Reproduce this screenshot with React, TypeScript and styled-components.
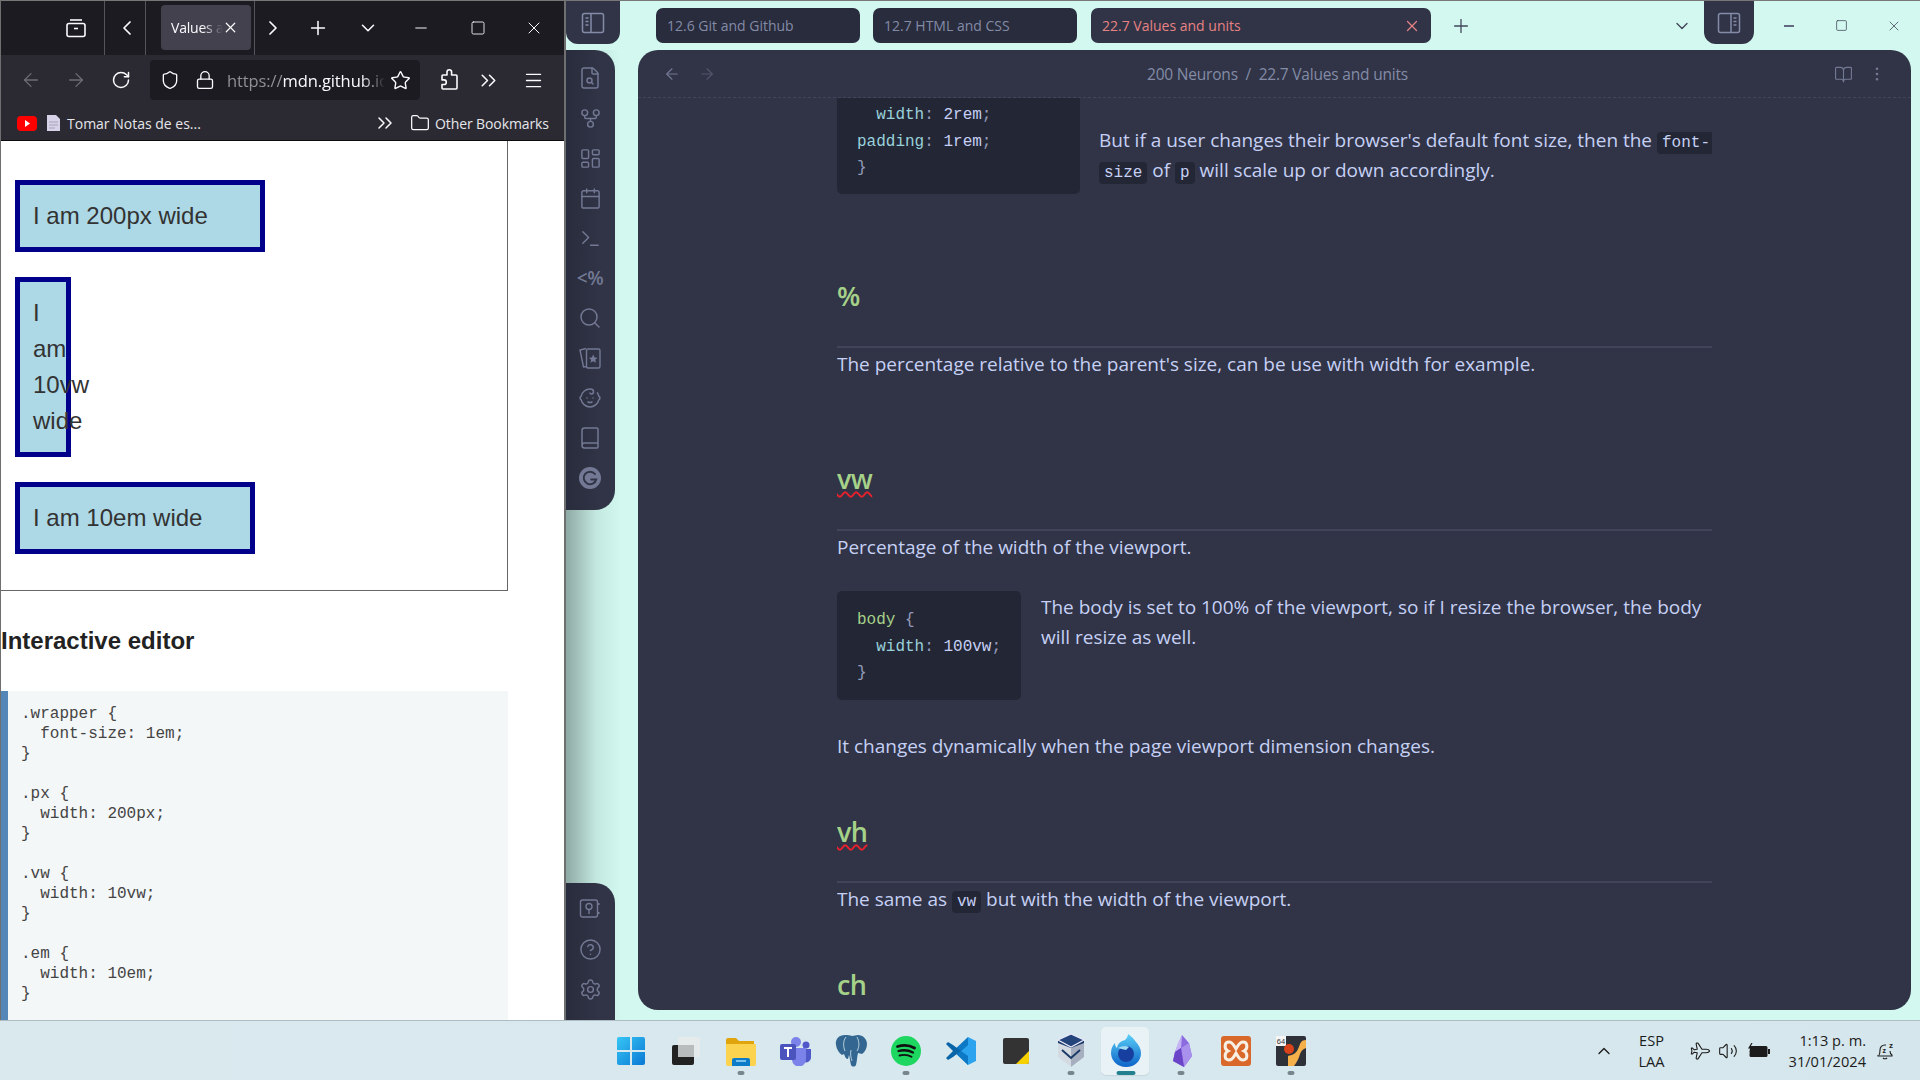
import React from "react";
import styled, { createGlobalStyle } from "styled-components";
import {
  ArrowLeft, ArrowRight, Baby, Book, BookOpen, Calendar, ChevronDown, ChevronLeft, ChevronRight, ChevronUp,
  ChevronsRight, CircleHelp, EllipsisVertical, FileSearch, Folder, GitFork, LayoutDashboard, Lock, Menu,
  Minus, Plus, RotateCw, Search, Settings, Shield, Square, Star, Terminal, Volume2, X, Plane,
} from "lucide-react";

const UI = `"Open Sans", "Noto Sans", sans-serif`;
const MONO = `"Liberation Mono", monospace`;

const Global = createGlobalStyle`
  html, body { margin: 0; padding: 0; width: 1920px; height: 1080px; overflow: hidden; background: #d2f8f0; }
  * { box-sizing: border-box; }
`;

const Screen = styled.div`display:flex;flex-direction:column;width:1920px;height:1080px;overflow:hidden;`;
const Windows = styled.div`display:flex;height:1020px;`;

/* ---------- Firefox ---------- */
const Browser = styled.div`width:566px;height:1020px;display:flex;flex-direction:column;border-left:1px solid #6f6f6f;border-right:2px solid #6f6f6f;border-top:1px solid #777;background:#fff;overflow:hidden;`;
const TabStrip = styled.div`height:54px;background:#1c1b22;display:flex;align-items:stretch;color:#fbfbfe;flex:none;`;
const Slot = styled.div<{ $w: number; $ml?: number; $dim?: boolean }>`
  width:${p => p.$w}px;margin-left:${p => p.$ml ?? 0}px;flex:none;display:flex;align-items:center;justify-content:center;
  color:${p => (p.$dim ? "#6e6d74" : "#fbfbfe")};
`;
const StripSep = styled.div<{ $ml?: number }>`width:1px;background:#55545c;margin-left:${p => p.$ml ?? 0}px;flex:none;`;
const BrowserTab = styled.div`width:90px;margin:4px 0 5px 15px;border-radius:4px;background:#42414d;display:flex;align-items:center;padding:0 12px 0 10px;position:relative;flex:none;`;
const TabLabel = styled.span`font:14px ${UI};letter-spacing:-.2px;color:#fbfbfe;white-space:nowrap;overflow:hidden;width:52px;-webkit-mask-image:linear-gradient(90deg,#000 60%,transparent);mask-image:linear-gradient(90deg,#000 60%,transparent);`;
const NavRow = styled.div`height:50px;background:#2b2a33;display:flex;align-items:center;padding-left:8px;flex:none;`;
const UrlBar = styled.div`width:270px;height:40px;margin-left:7px;background:#1c1b22;border-radius:4px;display:flex;align-items:center;color:#fbfbfe;flex:none;padding-left:10px;`;
const UrlText = styled.div`font:16.5px/22px ${UI};letter-spacing:-.1px;width:158px;margin-left:12px;padding-top:2px;overflow:hidden;white-space:nowrap;color:#fbfbfe;-webkit-mask-image:linear-gradient(90deg,#000 85%,transparent);mask-image:linear-gradient(90deg,#000 85%,transparent);`;
const UrlScheme = styled.span`color:#8f8f94;`;
const BookmarkRow = styled.div`height:36px;background:#2b2a33;border-bottom:1px solid #0c0c0d;display:flex;align-items:center;padding:1px 0 0 16px;color:#fbfbfe;flex:none;`;
const BookmarkText = styled.span<{ $w: number; $ls?: number }>`font:14px ${UI};letter-spacing:${p => p.$ls ?? 0}px;color:#e6e6ea;white-space:nowrap;width:${p => p.$w}px;flex:none;`;
const Demo = styled.div`width:507px;height:450px;border-right:1px solid #666;border-bottom:1px solid #666;padding:38.5px 0 0 14px;display:flex;flex-direction:column;gap:25px;flex:none;`;
const Sized = styled.div<{ $w: number }>`width:${p => p.$w}px;border:5px solid #00008b;background:#add8e6;padding:13px 13px;font:24px/36px "Liberation Sans",Arial,sans-serif;color:#333;`;
const EditorTitle = styled.h2`margin:27px 0 0;font:bold 24px/46px "Liberation Sans",Arial,sans-serif;color:#222;height:46px;flex:none;`;
const CodeSample = styled.pre`margin:27px 0 0;width:507px;flex:1;background:#f4f7f8;border-left:7px solid #5586b8;padding:13px 0 0 13px;font:16px/20px ${MONO};color:#444;`;

/* ---------- Obsidian ---------- */
const Obsidian = styled.div`flex:1;height:1020px;display:flex;flex-direction:column;background:#d2f8f0;border-top:1px solid #777;`;
const TitleRow = styled.div`height:49px;display:flex;align-items:flex-start;flex:none;color:#414559;`;
const SideToggle = styled.div`width:54px;height:43px;background:#303446;border-radius:0 0 12px 12px;display:flex;align-items:center;justify-content:center;color:#838ba7;flex:none;`;
const NoteTab = styled.div<{ $w: number; $ml: number; $active?: boolean }>`
  width:${p => p.$w}px;height:35px;margin:7px 0 0 ${p => p.$ml}px;background:${p => (p.$active ? "#303446" : "#292c3c")};
  border-radius:7px;display:flex;align-items:center;justify-content:space-between;padding:0 10px 0 11px;flex:none;
  font:14px ${UI};letter-spacing:0;color:${p => (p.$active ? "#e78284" : "#838ba7")};
`;
const TitleIcon = styled.div<{ $w: number; $ml: number; $mt?: number }>`
  width:${p => p.$w}px;margin:${p => p.$mt ?? 7}px 0 0 ${p => p.$ml}px;height:35px;display:flex;align-items:center;justify-content:center;flex:none;
`;
const PanelToggle = styled(SideToggle)`width:50px;margin-left:10px;height:43px;`;
const WorkRow = styled.div`flex:1;display:flex;min-height:0;`;
const RailColumn = styled.div`width:72px;flex:none;display:flex;flex-direction:column;justify-content:space-between;padding-bottom:0;background:linear-gradient(90deg,#8ea9a3 0,#c3e8e0 30px,#d2f8f0 55px);`;
const Rail = styled.div<{ $h: number; $pt: number; $top?: boolean }>`
  width:49px;height:${p => p.$h}px;padding-top:${p => p.$pt}px;
  border-radius:${p => (p.$top ? "0 20px 20px 0" : "0 20px 0 0")};
  background:linear-gradient(90deg,#292c3c,#303446 70%);display:flex;flex-direction:column;align-items:center;color:#737994;
`;
const RailSlot = styled.div`height:40px;width:100%;display:flex;align-items:center;justify-content:center;flex:none;padding-right:1px;`;
const PercentMark = styled.span`font:600 19px ${UI};letter-spacing:-.5px;color:#737994;`;
const Pane = styled.main`width:1273px;height:960px;background:#303446;border-radius:20px;display:flex;flex-direction:column;overflow:hidden;flex:none;`;
const PaneHeader = styled.header`height:48px;border-bottom:1px dashed #414559;display:flex;align-items:center;position:relative;color:#626880;flex:none;padding:1px 0 0 24px;`;
const HeadBtn = styled.div<{ $ml?: number; $mr?: number; $c?: string }>`width:20px;display:flex;justify-content:center;margin-left:${p => p.$ml ?? 0}px;margin-right:${p => p.$mr ?? 0}px;color:${p => p.$c ?? "#737994"};flex:none;`;
const PaneTitle = styled.div`flex:1;text-align:center;font:15.5px ${UI};letter-spacing:-.2px;color:#838ba7;padding-left:5px;`;
const Doc = styled.article`width:875px;margin-left:199px;color:#c6d0f5;font:19px/30px ${UI};letter-spacing:-.01px;flex:1;overflow:hidden;`;
const Row = styled.div<{ $mt?: number }>`display:flex;align-items:flex-start;margin-top:${p => p.$mt ?? 0}px;`;
const CodeBlock = styled.pre<{ $w: number; $pt: number; $h: number }>`
  margin:0;width:${p => p.$w}px;height:${p => p.$h}px;padding:${p => p.$pt}px 0 0 20px;background:#232634;
  border-radius:0 0 5px 5px;font:16px/26.7px ${MONO};letter-spacing:0;color:#c6d0f5;flex:none;
`;
const FullBlock = styled(CodeBlock)`border-radius:5px;`;
const Prop = styled.span`color:#99d1db;`;
const Sel = styled.span`color:#a6d189;`;
const Punct = styled.span`color:#949cbb;`;
const Para = styled.p<{ $mt?: number; $ml?: number }>`margin:${p => p.$mt ?? 0}px 0 0 ${p => p.$ml ?? 0}px;white-space:nowrap;`;
const Code = styled.code`background:#232634;border-radius:4px;padding:2px 5px;font:16px ${MONO};letter-spacing:0;color:#c6d0f5;`;
const Heading = styled.h2<{ $mt: number; $wavy?: boolean }>`
  margin:${p => p.$mt}px 0 0;font:600 27px/36px ${UI};letter-spacing:-.6px;color:#a6d189;height:36px;
  text-decoration:${p => (p.$wavy ? "underline wavy #e8202c 1.5px" : "none")};text-underline-offset:2px;text-decoration-skip-ink:none;
`;
const Rule = styled.hr<{ $mt: number }>`margin:${p => p.$mt}px 0 0;border:0;height:2px;background:#414559;`;

/* ---------- Taskbar ---------- */
const Taskbar = styled.footer`height:60px;flex:none;background:linear-gradient(90deg,#dae9ee,#d7e8ee 50%,#d5e6ec);border-top:1px solid #aebdc4;display:flex;align-items:center;padding-left:603px;position:relative;`;
const TaskBtn = styled.div<{ $active?: boolean }>`width:55px;height:58px;display:flex;align-items:center;justify-content:center;position:relative;flex:none;
  &::before{content:"";display:${p => (p.$active ? "block" : "none")};position:absolute;left:3px;right:4px;top:5px;bottom:5px;background:rgba(255,255,255,.45);border-radius:5px;box-shadow:0 1px 1px rgba(0,0,0,.08);}
  svg{position:relative;}
`;
const RunDot = styled.span<{ $active?: boolean }>`position:absolute;bottom:5px;left:50%;transform:translateX(-50%);width:${p => (p.$active ? 19 : 7)}px;height:4px;border-radius:2px;background:${p => (p.$active ? "#23818f" : "#77868c")};`;
const Tray = styled.div`margin-left:auto;display:flex;align-items:center;height:100%;color:#1c1c1c;padding-right:25px;`;
const TrayIcon = styled.div<{ $ml: number }>`margin-left:${p => p.$ml}px;display:flex;align-items:center;flex:none;`;
const PlaneMark = styled(Plane)`transform:rotate(45deg);`;
const Lang = styled.div`width:40px;margin-left:18px;text-align:center;font:14.6px/21px ${UI};color:#1c1c1c;`;
const Clock = styled.div`margin-left:19px;text-align:right;font:14.6px/21px ${UI};color:#1c1c1c;white-space:nowrap;`;

const FirefoxView = () => (
  <svg width="20" height="20" viewBox="0 0 20 20" fill="none" stroke="#fbfbfe" strokeWidth="1.6">
    <rect x="1" y="5.5" width="18" height="13" rx="2" /><path d="M4 2h12" /><path d="M8 10.5h4" />
  </svg>
);
const Extension = () => (
  <svg width="24" height="24" viewBox="0 0 24 24" fill="none" stroke="#fbfbfe" strokeWidth="1.6" strokeLinejoin="round">
    <path d="M10 4a2.300 2.300 0 0 1 4.600 0v3H19a1 1 0 0 1 1 1v12a1 1 0 0 1-1 1H6a1 1 0 0 1-1-1v-3.500h2a2.300 2.300 0 0 0 0-4.600H5V8a1 1 0 0 1 1-1h4z" />
  </svg>
);
const YouTube = () => (
  <svg width="20" height="15" viewBox="0 0 20 15" style={{ flex: "none" }}>
    <rect width="20" height="15" rx="4" fill="#f00" /><path d="M8 4l5 3.5L8 11z" fill="#fff" />
  </svg>
);
const DocIcon = () => (
  <svg width="13" height="16" viewBox="0 0 13 16" style={{ margin: "0 7px 0 10px", flex: "none" }}>
    <path d="M0 0h9l4 4v12H0z" fill="#d8d2e8" /><path d="M2 7h9M2 10h9M2 13h6" stroke="#a8a2b8" />
  </svg>
);
const Cards = () => (
  <svg width="24" height="24" viewBox="0 0 24 24" fill="none" stroke="currentColor" strokeWidth="1.4">
    <path d="M8 2.5L2 4l3.5 17 3.5-.5" /><rect x="8.5" y="3" width="13.5" height="19" rx="1.5" />
    <path d="M15.2 8.5l1.4 3 3 .3-2.3 2 .7 3-2.8-1.6-2.8 1.6.7-3-2.3-2 3-.3z" fill="currentColor" stroke="none" />
  </svg>
);
const Vault = () => (
  <svg width="22" height="22" viewBox="0 0 22 22" fill="none" stroke="currentColor" strokeWidth="1.4">
    <rect x="1.5" y="2" width="17" height="17" rx="2" /><circle cx="10" cy="8.5" r="3" /><path d="M10 11.5V16" />
    <path d="M18.5 6h2M18.5 15h2" strokeWidth="2" />
  </svg>
);
const Grammarly = () => (
  <svg width="24" height="24" viewBox="0 0 24 24" fill="none">
    <circle cx="12" cy="12" r="11" fill="#737994" />
    <path d="M17 8a6.3 6.3 0 1 0 1.2 5.4h-5" stroke="#303446" strokeWidth="2" strokeLinecap="round" />
  </svg>
);
const SidebarLeft = () => (
  <svg width="24" height="24" viewBox="0 0 24 24" fill="none" stroke="currentColor" strokeWidth="1.5">
    <rect x="1.5" y="2.5" width="21" height="19" rx="2" /><path d="M10 2.5v19" /><path d="M4.5 7h3M4.500 10.5h3M4.500 14h3" />
  </svg>
);
const SidebarRight = () => (
  <svg width="24" height="24" viewBox="0 0 24 24" fill="none" stroke="currentColor" strokeWidth="1.5">
    <rect x="1.5" y="2.5" width="21" height="19" rx="2" /><path d="M14 2.5v19" /><path d="M16.5 7h3M16.5 10.5h3M16.5 14h3" />
  </svg>
);
const Dash = ({ w = 10, c = "#626880" }: { w?: number; c?: string }) => (
  <svg width={w} height="4" viewBox="0 0 10 4"><path d="M0 2h10" stroke={c} strokeWidth="2" /></svg>
);

/* taskbar logos */
const WinLogo = () => (
  <svg width="30" height="30" viewBox="0 0 30 30">
    <defs><linearGradient id="w" x1="0" y1="0" x2="1" y2="1"><stop offset="0" stopColor="#37c6f5" /><stop offset="1" stopColor="#0a78d4" /></linearGradient></defs>
    <path d="M1 3a2 2 0 0 1 2-2h11v13H1zM16 1h11a2 2 0 0 1 2 2v11H16zM1 16h13v13H3a2 2 0 0 1-2-2zM16 16h13v11a2 2 0 0 1-2 2H16z" fill="url(#w)" />
  </svg>
);
const TaskView = () => (
  <svg width="30" height="30" viewBox="0 0 30 30">
    <rect x="1" y="9" width="22" height="20" rx="2" fill="#222" /><rect x="7" y="1" width="22" height="20" rx="2" fill="#e8eaea" opacity=".85" />
    <rect x="7" y="9" width="16" height="12" fill="#b8bcbc" />
  </svg>
);
const Explorer = () => (
  <svg width="30" height="30" viewBox="0 0 30 30">
    <path d="M0 4a2 2 0 0 1 2-2h8l3 3h15v6H0z" fill="#e0a40c" /><path d="M0 8h30v20a2 2 0 0 1-2 2H2a2 2 0 0 1-2-2z" fill="#fcd34f" />
    <path d="M6 24a2 2 0 0 1 2-2h14a2 2 0 0 1 2 2v6H6z" fill="#0d7cc8" /><path d="M10 25h10" stroke="#9fd8f8" strokeWidth="1.5" />
  </svg>
);
const Teams = () => (
  <svg width="32" height="30" viewBox="0 0 32 30">
    <circle cx="16" cy="6" r="5" fill="#7b83eb" /><circle cx="26" cy="9" r="3.5" fill="#5059c9" />
    <path d="M22 13h9v9a5 5 0 0 1-7 4z" fill="#5059c9" /><path d="M9 12h17v11a7 7 0 0 1-14 1z" fill="#7b83eb" />
    <rect x="0" y="8" width="16" height="16" rx="2" fill="#4b53bc" /><path d="M4 12h8M8 12v9" stroke="#fff" strokeWidth="2" />
  </svg>
);
const Elephant = () => (
  <svg width="32" height="34" viewBox="0 0 32 34">
    <path d="M10 1c-6 0-10 4-9 10 .5 4 3 8 6 10l2-1c1 3 2 5 4 5l1-4c1 3 1 7 2 10 1 2 4 2 5 0 1-4 1-8 2-12l4 1c3-2 5-6 5-10 0-5-4-9-9-9-2 0-4 .8-6 1-2-.7-4-1-7-1z" fill="#336791" />
    <path d="M11 3c-3 4-3 9-1 14M22 3c2 4 3 9 0 14M16 16c-1 4 0 8 1 11" stroke="#d7e8ee" strokeWidth=".8" fill="none" />
  </svg>
);
const Spotify = () => (
  <svg width="30" height="30" viewBox="0 0 30 30" fill="none" stroke="#111" strokeLinecap="round">
    <circle cx="15" cy="15" r="15" fill="#1ed760" stroke="none" />
    <path d="M6.500 10.500c6-1.800 12-1.300 17 1.500" strokeWidth="2.8" /><path d="M7.500 15c5-1.300 10-.9 14.500 1.500" strokeWidth="2.3" /><path d="M8.500 19.500c4-1 8.500-.7 12 1.300" strokeWidth="1.9" />
  </svg>
);
const VSCode = () => (
  <svg width="30" height="30" viewBox="0 0 30 30">
    <path d="M22 1l8 4v20l-8 4-12-12 12-9z" fill="#2ba3ee" /><path d="M22 1L7 15l15 14V20l-7-5 7-6z" fill="#0d78c4" />
    <path d="M22 9L7 21l-5 3-2-2 7-7-7-7 2-2 5 3 8 6z" fill="#0a65a8" />
  </svg>
);
const Sticky = () => (
  <svg width="26" height="26" viewBox="0 0 26 26">
    <rect width="26" height="26" rx="2" fill="#333" /><path d="M26 13v11a2 2 0 0 1-2 2H13z" fill="#f7d000" />
  </svg>
);
const VBox = () => (
  <svg width="30" height="36" viewBox="0 0 30 36">
    <path d="M15 1L2 7v14l13 7 13-7V7z" fill="#1b3a68" /><path d="M15 1l13 6-13 7L2 7z" fill="#24447c" stroke="#eef" strokeWidth="1.200" />
    <path d="M2 10v14l13 10V15z" fill="#d4dae2" /><path d="M28 10v14L15 34V15z" fill="#a6afbf" /><path d="M6 17l9 8 9-8" stroke="#1b3a68" fill="none" strokeWidth="2" />
  </svg>
);
const Fox = () => (
  <svg width="30" height="34" viewBox="0 0 30 34">
    <defs><linearGradient id="fx" x1="0" y1="0" x2="0" y2="1"><stop offset="0" stopColor="#5bd0f8" /><stop offset="1" stopColor="#0c63c8" /></linearGradient></defs>
    <path d="M15 33C6 33 0 26 0 19 0 14 2 11 4 9c0 3 1 4 2 5 1-5 4-7 8-8 2-2 3-4 3-6 4 3 6 5 8 8 3 3 5 7 5 11 0 8-6 14-15 14z" fill="url(#fx)" />
    <circle cx="15" cy="20" r="8" fill="#173fa0" /><path d="M7 14c3-2 8-3 11-1l-3 3c-3-1-6-1-8-2z" fill="#9fdcf5" />
  </svg>
);
const Gem = () => (
  <svg width="22" height="32" viewBox="0 0 22 32">
    <path d="M12 0l7 8 3 13-8 11-11-6 2-9z" fill="#8b6be0" /><path d="M12 0l-1 13-6 4 3-9z" fill="#c4b2f4" /><path d="M11 13l8-5 3 13-8 11z" fill="#a890ec" /><path d="M5 17l6-4 3 19-11-6z" fill="#6a45c8" />
  </svg>
);
const Xampp = () => (
  <svg width="30" height="30" viewBox="0 0 30 30">
    <rect width="30" height="30" rx="3" fill="#d9682a" />
    <path d="M8 6c4 0 5 4 7 7 2-3 3-7 7-7 5 0 5 7 1 9 4 2 4 9-1 9-4 0-5-4-7-7-2 3-3 7-7 7-5 0-5-7-1-9-4-2-4-9 1-9z" fill="none" stroke="#f8efe4" strokeWidth="3" />
  </svg>
);
const Sublime64 = () => (
  <svg width="30" height="30" viewBox="0 0 30 30">
    <rect width="30" height="30" rx="2" fill="#2f3138" /><rect width="10" height="10" fill="#f5f5f5" />
    <text x="5" y="8" fontSize="7.5" textAnchor="middle" fontFamily="Liberation Sans" fill="#333">64</text>
    <path d="M30 4c-6 0-6 5-8 9-2 5-6 6-10 7v10h6c3-4 5-8 6-12 1-3 3-5 6-6z" fill="#f5b04a" /><circle cx="13" cy="13" r="5" fill="#d8431a" />
  </svg>
);
const ZBell = () => (
  <svg width="20" height="20" viewBox="0 0 20 20" fill="none" stroke="#1c1c1c" strokeWidth="1.100">
    <path d="M4 14c1-1 1-3 1-5 0-3 2-5 5-5h1M15 10c0 2 0 3 2 4v1H3v-1M8 17c1 1 3 1 4 0" />
    <text x="7.500" y="12" fontSize="7" fontFamily="Liberation Sans" fontWeight="bold" stroke="none" fill="#1c1c1c">z</text>
    <text x="14" y="7" fontSize="8" fontFamily="Liberation Sans" fontWeight="bold" stroke="none" fill="#1c1c1c">z</text>
  </svg>
);
const Battery = () => (
  <svg width="22" height="16" viewBox="0 0 22 16">
    <path d="M2 3h16a1.500 1.500 0 0 1 1.500 1.500v8a1.500 1.500 0 0 1-1.500 1.500H3a1.500 1.500 0 0 1-1.500-1.500z" fill="#1c1c1c" /><rect x="20" y="6" width="2" height="5" fill="#1c1c1c" />
    <path d="M4 0L1 5h3L2 9" stroke="#1c1c1c" fill="none" strokeWidth="1.200" />
  </svg>
);

const taskItems: { icon: React.ReactNode; run?: boolean; active?: boolean }[] = [
  { icon: <WinLogo /> }, { icon: <TaskView /> }, { icon: <Explorer />, run: true }, { icon: <Teams /> },
  { icon: <Elephant /> }, { icon: <Spotify />, run: true }, { icon: <VSCode /> }, { icon: <Sticky /> },
  { icon: <VBox />, run: true }, { icon: <Fox />, active: true }, { icon: <Gem />, run: true },
  { icon: <Xampp /> }, { icon: <Sublime64 />, run: true },
];

const railTop: React.ReactNode[] = [
  <FileSearch size={24} strokeWidth={1.5} />, <GitFork size={23} strokeWidth={1.5} />, <LayoutDashboard size={23} strokeWidth={1.5} />,
  <Calendar size={23} strokeWidth={1.5} />, <Terminal size={23} strokeWidth={1.5} />, <PercentMark>&lt;%</PercentMark>,
  <Search size={24} strokeWidth={1.5} />, <Cards />, <Baby size={24} strokeWidth={1.5} />, <Book size={24} strokeWidth={1.5} />, <Grammarly />,
];
const railBottom: React.ReactNode[] = [<Vault />, <CircleHelp size={23} strokeWidth={1.5} />, <Settings size={23} strokeWidth={1.5} />];

const sample = `.wrapper {
  font-size: 1em;
}

.px {
  width: 200px;
}

.vw {
  width: 10vw;
}

.em {
  width: 10em;
}`;

export default function App() {
  return (
    <Screen>
      <Global />
      <Windows>
        <Browser>
          <TabStrip>
            <Slot $w={56} $ml={47}><FirefoxView /></Slot>
            <StripSep />
            <Slot $w={37} $ml={3}><ChevronLeft size={24} strokeWidth={1.7} /></Slot>
            <StripSep />
            <BrowserTab>
              <TabLabel>Values and units</TabLabel>
              <X size={17} strokeWidth={1.7} style={{ position: "absolute", right: 12 }} />
            </BrowserTab>
            <StripSep $ml={3} />
            <Slot $w={36}><ChevronRight size={24} strokeWidth={1.7} /></Slot>
            <Slot $w={44} $ml={5}><Plus size={22} strokeWidth={1.7} /></Slot>
            <Slot $w={44} $ml={6}><ChevronDown size={22} strokeWidth={1.7} /></Slot>
            <Slot $w={54} $ml={4}><Minus size={18} strokeWidth={1.3} /></Slot>
            <Slot $w={54} $ml={3}><Square size={16} strokeWidth={1.3} /></Slot>
            <Slot $w={54} $ml={2}><X size={20} strokeWidth={1.2} /></Slot>
          </TabStrip>
          <NavRow>
            <Slot $w={44} $dim><ArrowLeft size={22} strokeWidth={1.4} /></Slot>
            <Slot $w={44} $ml={1} $dim><ArrowRight size={22} strokeWidth={1.4} /></Slot>
            <Slot $w={44} $ml={1}><RotateCw size={20} strokeWidth={1.8} /></Slot>
            <UrlBar>
              <Shield size={20} strokeWidth={1.6} />
              <Lock size={20} strokeWidth={1.6} style={{ marginLeft: 15 }} />
              <UrlText><UrlScheme>https://</UrlScheme>mdn.github.io/learning-area</UrlText>
              <Star size={21} strokeWidth={1.6} style={{ marginLeft: 5 }} />
            </UrlBar>
            <Slot $w={40} $ml={9}><Extension /></Slot>
            <Slot $w={38}><ChevronsRight size={25} strokeWidth={1.5} /></Slot>
            <Slot $w={40} $ml={6}><Menu size={21} strokeWidth={1.6} /></Slot>
          </NavRow>
          <BookmarkRow>
            <YouTube />
            <DocIcon />
            <BookmarkText $w={306}>Tomar Notas de es...</BookmarkText>
            <ChevronsRight size={24} strokeWidth={1.5} style={{ marginRight: 13 }} />
            <Folder size={20} strokeWidth={1.5} style={{ marginRight: 5 }} />
            <BookmarkText $w={115} $ls={-0.1}>Other Bookmarks</BookmarkText>
          </BookmarkRow>
          <Demo>
            <Sized $w={250}>I am 200px wide</Sized>
            <Sized $w={56}>I am 10vw wide</Sized>
            <Sized $w={240}>I am 10em wide</Sized>
          </Demo>
          <EditorTitle>Interactive editor</EditorTitle>
          <CodeSample>{sample}</CodeSample>
        </Browser>
        <Obsidian>
          <TitleRow>
            <SideToggle><SidebarLeft /></SideToggle>
            <NoteTab $w={204} $ml={36}>12.6 Git and Github</NoteTab>
            <NoteTab $w={204} $ml={13}>12.7 HTML and CSS</NoteTab>
            <NoteTab $w={340} $ml={14} $active>22.7 Values and units<X size={18} strokeWidth={1.6} /></NoteTab>
            <TitleIcon $w={24} $ml={18}><Plus size={22} strokeWidth={1.4} /></TitleIcon>
            <TitleIcon $w={24} $ml={197}><ChevronDown size={20} strokeWidth={1.6} /></TitleIcon>
            <PanelToggle><SidebarRight /></PanelToggle>
            <TitleIcon $w={16} $ml={27} $mt={7}><Dash /></TitleIcon>
            <TitleIcon $w={16} $ml={36} $mt={7}><Square size={13} strokeWidth={1.4} /></TitleIcon>
            <TitleIcon $w={16} $ml={37} $mt={7}><X size={16} strokeWidth={1.2} /></TitleIcon>
          </TitleRow>
          <WorkRow>
            <RailColumn>
              <Rail $h={460} $pt={8} $top>
                {railTop.map((icon, i) => <RailSlot key={i}>{icon}</RailSlot>)}
              </Rail>
              <Rail $h={137} $pt={6}>
                {railBottom.map((icon, i) => <RailSlot key={i}>{icon}</RailSlot>)}
              </Rail>
            </RailColumn>
            <Pane>
              <PaneHeader>
                <HeadBtn><ArrowLeft size={18} strokeWidth={1.5} /></HeadBtn>
                <HeadBtn $ml={15} $c="#51576d"><ArrowRight size={18} strokeWidth={1.5} /></HeadBtn>
                <PaneTitle>200 Neurons&nbsp; /&nbsp; 22.7 Values and units</PaneTitle>
                <HeadBtn><BookOpen size={19} strokeWidth={1.4} /></HeadBtn>
                <HeadBtn $ml={14} $mr={24}><EllipsisVertical size={18} strokeWidth={1.6} /></HeadBtn>
              </PaneHeader>
              <Doc>
                <Row>
                  <CodeBlock $w={243} $pt={4} $h={96}>
                    {"  "}<Prop>width</Prop><Punct>:</Punct> 2rem<Punct>;</Punct>{"\n"}<Prop>padding</Prop><Punct>:</Punct> 1rem<Punct>;</Punct>{"\n"}<Punct>{"}"}</Punct>
                  </CodeBlock>
                  <Para $mt={27} $ml={19}>
                    But if a user changes their browser's default font size, then the <Code>font-</Code><br />
                    <Code>size</Code> of <Code>p</Code> will scale up or down accordingly.
                  </Para>
                </Row>
                <Heading $mt={84}>%</Heading>
                <Rule $mt={32} />
                <Para $mt={1}>The percentage relative to the parent's size, can be use with width for example.</Para>
                <Heading $mt={82} $wavy>vw</Heading>
                <Rule $mt={32} />
                <Para $mt={1}>Percentage of the width of the viewport.</Para>
                <Row $mt={29}>
                  <FullBlock $w={184} $pt={16} $h={109}>
                    <Sel>body</Sel> <Punct>{"{"}</Punct>{"\n"}{"  "}<Prop>width</Prop><Punct>:</Punct> 100vw<Punct>;</Punct>{"\n"}<Punct>{"}"}</Punct>
                  </FullBlock>
                  <Para $mt={1} $ml={20}>
                    The body is set to 100% of the viewport, so if I resize the browser, the body<br />
                    will resize as well.
                  </Para>
                </Row>
                <Para $mt={31}>It changes dynamically when the page viewport dimension changes.</Para>
                <Heading $mt={53} $wavy>vh</Heading>
                <Rule $mt={31} />
                <Para $mt={1}>The same as <Code>vw</Code> but with the width of the viewport.</Para>
                <Heading $mt={53}>ch</Heading>
              </Doc>
            </Pane>
          </WorkRow>
        </Obsidian>
      </Windows>
      <Taskbar>
        {taskItems.map((t, i) => (
          <TaskBtn key={i} $active={t.active}>
            {t.icon}
            {(t.run || t.active) && <RunDot $active={t.active} />}
          </TaskBtn>
        ))}
        <Tray>
          <ChevronUp size={20} strokeWidth={1.6} />
          <Lang>ESP<br />LAA</Lang>
          <TrayIcon $ml={17}><PlaneMark size={20} strokeWidth={1.3} /></TrayIcon>
          <TrayIcon $ml={9}><Volume2 size={20} strokeWidth={1.3} /></TrayIcon>
          <TrayIcon $ml={10}><Battery /></TrayIcon>
          <Clock>1:13 p. m.<br />31/01/2024</Clock>
          <TrayIcon $ml={9}><ZBell /></TrayIcon>
        </Tray>
      </Taskbar>
    </Screen>
  );
}
